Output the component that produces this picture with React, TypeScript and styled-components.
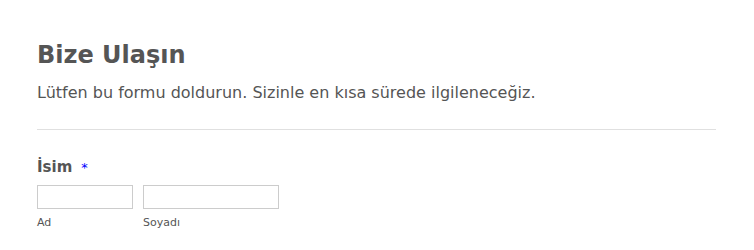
import styled, { createGlobalStyle } from 'styled-components'

const GlobalStyle = createGlobalStyle`
    body {
        margin: 0;
        background: #ffffff;
        font-family: "DejaVu Sans", "Liberation Sans", sans-serif;
        color: #555555;
    }
`

const Form = styled.div`
    padding: 40px 38px 0 37px;
`

const Header = styled.div`
    padding-bottom: 26px;
    border-bottom: 1px solid #e0e0e0;
`

const Title = styled.h1`
    margin: 0;
    font-size: 24px;
    line-height: 30px;
    font-weight: bold;
    color: #555555;
`

const Subtitle = styled.p`
    margin: 13px 0 0;
    font-size: 16px;
    line-height: 20px;
    color: #555555;
`

const Field = styled.div`
    padding-top: 28px;
`

const Label = styled.div`
    font-size: 15px;
    line-height: 18px;
    font-weight: bold;
    color: #555555;
`

const Star = styled.span`
    color: #0000ff;
    font-weight: normal;
    margin-left: 9px;
    font-size: 13px;
`

const Inputs = styled.div`
    display: flex;
    gap: 10px;
    margin-top: 8px;
`

const Part = styled.div`
    display: flex;
    flex-direction: column;
`

const Input = styled.input<{ w: number }>`
    box-sizing: border-box;
    width: ${(p) => p.w}px;
    height: 24px;
    margin: 0;
    border: 1px solid #cccccc;
    border-radius: 0;
    background: #ffffff;
    outline: none;
`

const Sub = styled.label`
    margin-top: 7px;
    font-size: 11px;
    line-height: 14px;
    color: #555555;
`

export default function App() {
    return (
        <>
            <GlobalStyle />
            <Form>
                <Header>
                    <Title>Bize Ulaşın</Title>
                    <Subtitle>Lütfen bu formu doldurun. Sizinle en kısa sürede ilgileneceğiz.</Subtitle>
                </Header>
                <Field>
                    <Label>İsim<Star>*</Star></Label>
                    <Inputs>
                        <Part>
                            <Input w={96} />
                            <Sub>Ad</Sub>
                        </Part>
                        <Part>
                            <Input w={136} />
                            <Sub>Soyadı</Sub>
                        </Part>
                    </Inputs>
                </Field>
            </Form>
        </>
    )
}
